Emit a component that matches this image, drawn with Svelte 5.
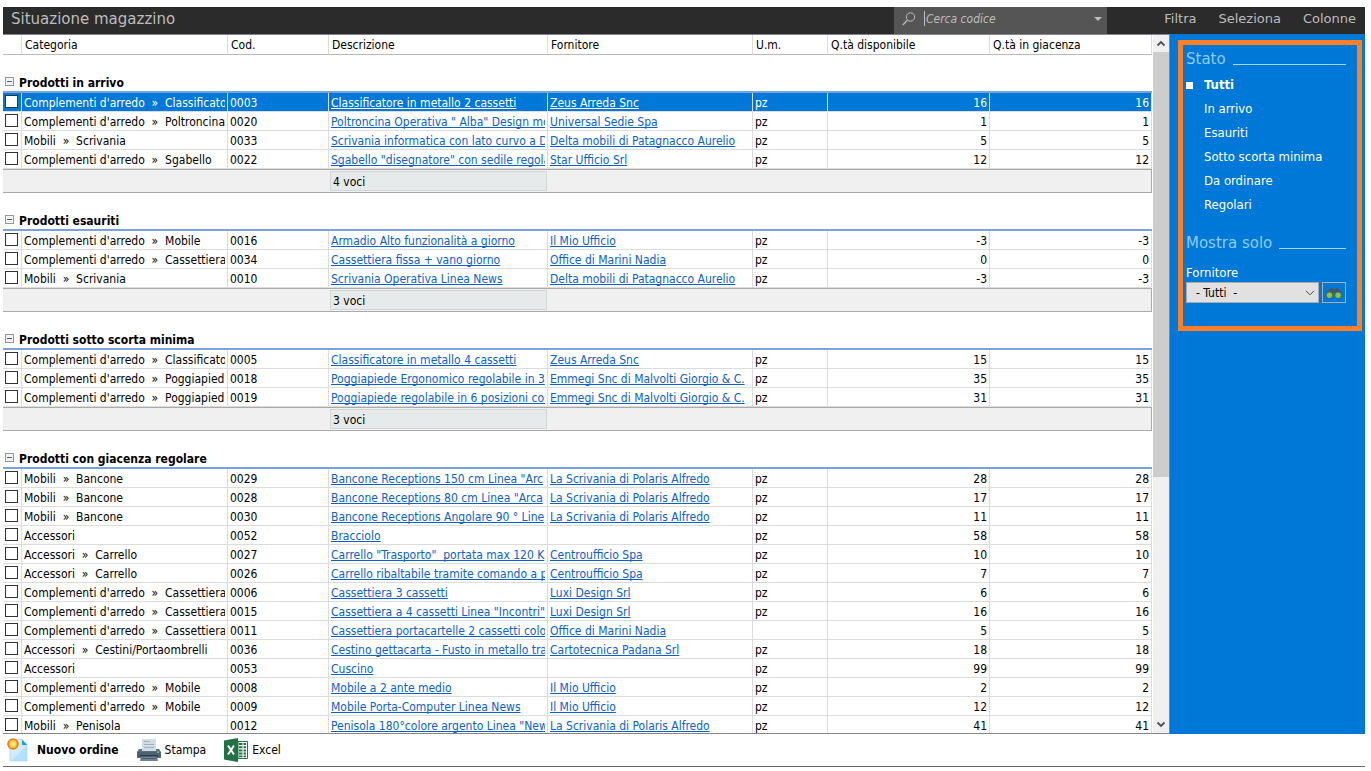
<script>
  const columns = [
    { label: '', width: 19 },
    { label: 'Categoria', width: 206 },
    { label: 'Cod.', width: 101 },
    { label: 'Descrizione', width: 219 },
    { label: 'Fornitore', width: 205 },
    { label: 'U.m.', width: 75 },
    { label: 'Q.tà disponibile', width: 162 },
    { label: 'Q.tà in giacenza', width: null }
  ];

  const arredo = "Complementi d'arredo";

  const groups = $state([
    {
      title: 'Prodotti in arrivo',
      open: true,
      summary: '4 voci',
      rows: [
        [`${arredo}  »  Classificato`, '0003', 'Classificatore in metallo 2 cassetti', 'Zeus Arreda Snc', 'pz', 16],
        [`${arredo}  »  Poltroncina`, '0020', 'Poltroncina Operativa " Alba" Design mo', 'Universal Sedie Spa', 'pz', 1],
        ['Mobili  »  Scrivania', '0033', 'Scrivania informatica con lato curvo a Dx', 'Delta mobili di Patagnacco Aurelio', 'pz', 5],
        [`${arredo}  »  Sgabello`, '0022', 'Sgabello "disegnatore" con sedile regola', 'Star Ufficio Srl', 'pz', 12]
      ]
    },
    {
      title: 'Prodotti esauriti',
      open: true,
      summary: '3 voci',
      rows: [
        [`${arredo}  »  Mobile`, '0016', 'Armadio Alto funzionalità a giorno', 'Il Mio Ufficio', 'pz', -3],
        [`${arredo}  »  Cassettiera`, '0034', 'Cassettiera fissa + vano giorno', 'Office di Marini Nadia', 'pz', 0],
        ['Mobili  »  Scrivania', '0010', 'Scrivania Operativa Linea News', 'Delta mobili di Patagnacco Aurelio', 'pz', -3]
      ]
    },
    {
      title: 'Prodotti sotto scorta minima',
      open: true,
      summary: '3 voci',
      rows: [
        [`${arredo}  »  Classificato`, '0005', 'Classificatore in metallo 4 cassetti', 'Zeus Arreda Snc', 'pz', 15],
        [`${arredo}  »  Poggiapied`, '0018', 'Poggiapiede Ergonomico regolabile in 3', 'Emmegi Snc di Malvolti Giorgio & C.', 'pz', 35],
        [`${arredo}  »  Poggiapied`, '0019', 'Poggiapiede regolabile in 6 posizioni con', 'Emmegi Snc di Malvolti Giorgio & C.', 'pz', 31]
      ]
    },
    {
      title: 'Prodotti con giacenza regolare',
      open: true,
      summary: null,
      rows: [
        ['Mobili  »  Bancone', '0029', 'Bancone Receptions 150 cm Linea "Arc', 'La Scrivania di Polaris Alfredo', 'pz', 28],
        ['Mobili  »  Bancone', '0028', 'Bancone Receptions 80 cm Linea "Arca', 'La Scrivania di Polaris Alfredo', 'pz', 17],
        ['Mobili  »  Bancone', '0030', 'Bancone Receptions Angolare 90 ° Line', 'La Scrivania di Polaris Alfredo', 'pz', 11],
        ['Accessori', '0052', 'Bracciolo', '', 'pz', 58],
        ['Accessori  »  Carrello', '0027', 'Carrello "Trasporto"  portata max 120 K', 'Centroufficio Spa', 'pz', 10],
        ['Accessori  »  Carrello', '0026', 'Carrello ribaltabile tramite comando a pi', 'Centroufficio Spa', 'pz', 7],
        [`${arredo}  »  Cassettiera`, '0006', 'Cassettiera 3 cassetti', 'Luxi Design Srl', 'pz', 6],
        [`${arredo}  »  Cassettiera`, '0015', 'Cassettiera a 4 cassetti Linea "Incontri"', 'Luxi Design Srl', 'pz', 16],
        [`${arredo}  »  Cassettiera`, '0011', 'Cassettiera portacartelle 2 cassetti colo', 'Office di Marini Nadia', '', 5],
        ['Accessori  »  Cestini/Portaombrelli', '0036', 'Cestino gettacarta - Fusto in metallo tra', 'Cartotecnica Padana Srl', 'pz', 18],
        ['Accessori', '0053', 'Cuscino', '', 'pz', 99],
        [`${arredo}  »  Mobile`, '0008', 'Mobile a 2 ante medio', 'Il Mio Ufficio', 'pz', 2],
        [`${arredo}  »  Mobile`, '0009', 'Mobile Porta-Computer Linea News', 'Il Mio Ufficio', 'pz', 12],
        ['Mobili  »  Penisola', '0012', 'Penisola 180°colore argento Linea "New', 'La Scrivania di Polaris Alfredo', 'pz', 41]
      ]
    }
  ]);

  const states = ['Tutti', 'In arrivo', 'Esauriti', 'Sotto scorta minima', 'Da ordinare', 'Regolari'];
  let activeState = $state('Tutti');
  let selected = $state('0003');
</script>

<div class="window">
  <header class="titlebar">
    <h1>Situazione magazzino</h1>
    <div class="search">
      <svg class="lens" width="14" height="14" viewBox="0 0 14 14" aria-hidden="true">
        <circle cx="8.5" cy="5" r="4.2" fill="none" stroke="#bdbdbd" />
        <path d="M5.4 8.2 0.8 13" stroke="#bdbdbd" stroke-width="1.3" fill="none" />
      </svg>
      <input type="text" placeholder="Cerca codice" aria-label="Cerca codice" />
      <button class="drop" aria-label="Ricerche recenti">
        <svg width="8" height="4" viewBox="0 0 8 4"><path d="M0 0h8L4 4z" fill="#bdbdbd" /></svg>
      </button>
    </div>
    <nav>
      <button>Filtra</button>
      <button>Seleziona</button>
      <button>Colonne</button>
    </nav>
  </header>

  <div class="body">
    <main class="list">
      <div class="viewport">
        <table>
          <colgroup>
            {#each columns as c}
              <col style={c.width ? `width:${c.width}px` : ''} />
            {/each}
          </colgroup>
          <thead>
            <tr>
              {#each columns as c}
                <th scope="col">{c.label}</th>
              {/each}
            </tr>
          </thead>
          {#each groups as g}
            <tbody>
              <tr class="group">
                <th colspan="8" scope="colgroup">
                  <div>
                    <button class="toggle" aria-label={g.title} aria-expanded={g.open} onclick={() => (g.open = !g.open)}>
                      <svg width="9" height="9" viewBox="0 0 9 9">
                        <rect x=".5" y=".5" width="8" height="8" fill="#f3f3f3" stroke="#969696" />
                        <path d="M2 4.5h5" stroke="#3c5a9a" />
                        {#if !g.open}<path d="M4.5 2v5" stroke="#3c5a9a" />{/if}
                      </svg>
                    </button>
                    <span>{g.title}</span>
                  </div>
                </th>
              </tr>
              {#if g.open}
                {#each g.rows as [cat, code, desc, supplier, unit, qty]}
                  <tr class="item" class:selected={selected === code} onclick={() => (selected = code)}>
                    <td class="check"><input type="checkbox" aria-label={`Seleziona ${code}`} /></td>
                    <td><div>{cat}</div></td>
                    <td><div>{code}</div></td>
                    <td><div><a href="#prodotto">{desc}</a></div></td>
                    <td><div>{#if supplier}<a href="#fornitore">{supplier}</a>{/if}</div></td>
                    <td><div>{unit}</div></td>
                    <td class="num"><div>{qty}</div></td>
                    <td class="num"><div>{qty}</div></td>
                  </tr>
                {/each}
                {#if g.summary}
                  <tr class="summary">
                    <td colspan="3"></td>
                    <td><div>{g.summary}</div></td>
                    <td colspan="4"></td>
                  </tr>
                {/if}
              {/if}
            </tbody>
          {/each}
        </table>
      </div>
      <div class="scrollbar" aria-hidden="true">
        <svg width="16" height="17" viewBox="0 0 16 17"><path d="M4.5 10.5 8 7l3.5 3.5" fill="none" stroke="#505050" stroke-width="1.8" /></svg>
        <div class="track"><div class="thumb"></div></div>
        <svg width="16" height="17" viewBox="0 0 16 17"><path d="M4.5 6.5 8 10l3.5-3.5" fill="none" stroke="#505050" stroke-width="1.8" /></svg>
      </div>
    </main>

    <aside>
      <div class="panel">
        <h2>Stato</h2>
        <ul>
          {#each states as s}
            <li><button class:active={activeState === s} onclick={() => (activeState = s)}>{s}</button></li>
          {/each}
        </ul>
        <h2>Mostra solo</h2>
        <label for="supplier">Fornitore</label>
        <div class="pick">
          <div class="select">
            <select id="supplier">
              <option>- Tutti&nbsp; -</option>
            </select>
            <svg width="10" height="6" viewBox="0 0 10 6" aria-hidden="true"><path d="M1 .8 5 4.8 9 .8" fill="none" stroke="#444" /></svg>
          </div>
          <button class="find" aria-label="Cerca fornitore">
            <svg width="16" height="12" viewBox="0 0 16 12">
              <path d="M1 7C1.5 3 3 1 5.500 1L7 2h2l1.500-1C13 1 14.500 3 15 7l-2 2-4-1-.5-3h-1L7 8 3 9z" fill="#4a5560" />
              <circle cx="3.700" cy="8" r="3.500" fill="#4a6a45" />
              <circle cx="12.300" cy="8" r="3.500" fill="#4a6a45" />
              <circle cx="3.500" cy="8.200" r="2.700" fill="#8cc63f" />
              <circle cx="12.100" cy="8.200" r="2.700" fill="#8cc63f" />
            </svg>
          </button>
        </div>
      </div>
    </aside>
  </div>

  <footer class="toolbar">
    <button class="primary">
      <svg width="22" height="24" viewBox="0 0 22 24" aria-hidden="true">
        <defs>
          <linearGradient id="sheet" x1="0" y1="0" x2="1" y2="1">
            <stop offset="0" stop-color="#d9f1fd" /><stop offset="1" stop-color="#bfe7fb" />
          </linearGradient>
        </defs>
        <path d="M3 1.500h12l5 5V23H3z" fill="url(#sheet)" stroke="#a9cfe3" stroke-width=".6" />
        <path d="M15 1.500V7h5.200z" fill="#1b9be0" />
        <path d="M4 23 20 8v15z" fill="#9fdaf8" opacity=".5" />
        <circle cx="6" cy="6" r="5.800" fill="#ee7f1b" />
        <circle cx="6" cy="6" r="3.900" fill="#ffc93d" />
        <circle cx="6" cy="6" r="2.600" fill="#ffe47a" />
      </svg>
      <span>Nuovo ordine</span>
    </button>
    <button>
      <svg width="24" height="22" viewBox="0 0 24 22" aria-hidden="true">
        <path d="M5 0h14v12H5z" fill="#cfdde4" />
        <path d="M7 2.500h6M7 5.500h10M7 8.500h10" stroke="#9db1bc" />
        <path d="M2 10h3v2h14v-2h3l2 3v6H0v-6z" fill="#5b6f7d" />
        <path d="M0 13h24v5H0z" fill="#4d6170" />
        <path d="M20 12.500h2V14h-2z" fill="#6ed84c" />
        <path d="M3 16h18v2H3z" fill="#2c3b46" />
        <path d="M4 17.500h16l1 4.500H3z" fill="#6d8493" />
        <path d="M4 19h16v1H4z" fill="#4d6170" />
      </svg>
      <span>Stampa</span>
    </button>
    <button>
      <svg width="24" height="24" viewBox="0 0 24 24" aria-hidden="true">
        <path d="M14 3.500h9.500v17H14z" fill="#fff" stroke="#207245" />
        <path d="M15 5h3.500v2H15zM19.500 5H22v2h-2.500zM15 8.200h3.500v2H15zM19.500 8.200H22v2h-2.500zM15 11.400h3.500v2H15zM19.500 11.400H22v2h-2.500zM15 14.600h3.500v2H15zM19.500 14.600H22v2h-2.500zM15 17.600h3.500v1.600H15zM19.500 17.600H22v1.600h-2.500z" fill="#207245" />
        <path d="M0 2.500 14 0v24L0 21.500z" fill="#207245" />
        <path d="m4 7.500 6 9M10 7.500l-6 9" stroke="#fff" stroke-width="2" />
      </svg>
      <span>Excel</span>
    </button>
  </footer>
</div>

<style>
  :global(body) {
    margin: 0;
    background: #fff;
  }

  .window {
    box-sizing: border-box;
    height: 100vh;
    padding: 7px 6px 4px 3px;
    display: flex;
    flex-direction: column;
    font: 12px/18px 'DejaVu Sans Condensed', 'Noto Sans', sans-serif;
    color: #000;
  }

  button,
  input,
  select {
    font: inherit;
    color: inherit;
    border: 0;
    padding: 0;
    margin: 0;
    background: none;
  }

  button {
    cursor: pointer;
  }

  /* Title bar */
  .titlebar {
    flex: none;
    height: 27px;
    display: flex;
    align-items: center;
    background: #2b2b2b;
    color: #bdbdbd;
  }

  .titlebar h1 {
    flex: 1;
    margin: 0;
    padding: 0 8px 4px;
    font: 15px/20px 'DejaVu Sans', sans-serif;
  }

  .search {
    width: 213px;
    height: 27px;
    box-sizing: border-box;
    display: flex;
    align-items: center;
    padding: 0 5px 4px 8px;
    background: #555;
  }

  .search input {
    flex: 1;
    min-width: 0;
    height: 15px;
    margin-left: 8px;
    padding-left: 1px;
    border-left: 1px solid #bdbdbd;
    outline: 0;
    font-style: italic;
  }

  .search input::placeholder {
    color: #bdbdbd;
    opacity: 1;
  }

  .drop {
    display: flex;
  }

  nav {
    width: 258px;
    box-sizing: border-box;
    padding: 0 9px 4px 0;
    display: flex;
    justify-content: flex-end;
    gap: 22px;
    font: 13px/20px 'DejaVu Sans', sans-serif;
  }

  /* Product list */
  .body {
    flex: 1;
    min-height: 0;
    display: flex;
  }

  .list {
    flex: 1;
    min-width: 0;
    display: flex;
    gap: 1px;
    border: solid #85858d;
    border-width: 1px 1px 1px 0;
  }

  .viewport {
    flex: 1;
    min-width: 0;
    overflow: hidden;
  }

  table {
    width: 100%;
    table-layout: fixed;
    border-collapse: separate;
    border-spacing: 0;
  }

  th,
  td {
    box-sizing: border-box;
    padding: 0 2px;
    text-align: left;
    font-weight: normal;
    border-right: 1px solid #dcdcdc;
  }

  thead th {
    height: 20px;
    padding: 1px 3px 0;
    border-bottom: 1px solid #b9b9b9;
  }

  .group th {
    height: 38px;
    padding: 0 2px;
    vertical-align: bottom;
    border-right: 0;
    border-bottom: 2px solid #7ba2de;
    font-weight: bold;
    line-height: 16px;
  }

  .group div {
    display: flex;
    align-items: flex-start;
    gap: 5px;
  }

  .toggle {
    display: flex;
    padding-top: 2px;
  }

  .item td {
    height: 19px;
    border-bottom: 1px solid #dcdcdc;
  }

  .item div {
    height: 18px;
    line-height: 20px;
    overflow: hidden;
    white-space: pre;
  }

  .item .num {
    text-align: right;
  }

  .item a {
    color: #0b61cf;
    text-underline-offset: 1px;
    text-decoration-skip-ink: none;
  }

  .item.selected td {
    background: #0078d8;
    color: #fff;
  }

  .item.selected a {
    color: #fff;
  }

  .item .check {
    padding-top: 2px;
    vertical-align: top;
  }

  .check input {
    appearance: none;
    display: block;
    box-sizing: border-box;
    width: 13px;
    height: 13px;
    border: 1px solid #333;
    background: #fff;
  }

  .check input:checked {
    box-shadow: inset 0 0 0 2px #fff;
    background: #333;
  }

  .summary td {
    height: 24px;
    padding: 0 1px;
    background: #f0f0f0;
    border: solid #aaa;
    border-width: 1px 0;
  }

  .summary td:last-child {
    border-right-width: 1px;
  }

  .summary div {
    height: 18px;
    line-height: 20px;
    border: 1px solid #d2d6d6;
    background: #e6eaea;
    padding: 0 2px;
  }

  .scrollbar {
    width: 16px;
    display: flex;
    flex-direction: column;
    background: #f0f0f0;
  }

  .track {
    flex: 1;
  }

  .thumb {
    height: 64%;
    background: #cdcdcd;
  }

  /* Filter panel */
  aside {
    width: 195px;
    box-sizing: border-box;
    padding: 6px 3px 0 8px;
    background: #0078d8;
    color: #fff;
    font-size: 13px;
  }

  .panel {
    border: 5px solid #ff7f27;
    padding: 4px 11px 23px 3px;
  }

  h2 {
    display: flex;
    align-items: flex-end;
    gap: 7px;
    margin: 0;
    font: 15px/20px 'DejaVu Sans', sans-serif;
    color: #8ecbf7;
  }

  h2::after {
    content: '';
    flex: 1;
    margin-bottom: 4px;
    border-bottom: 1px solid #a5d5f8;
  }

  ul {
    list-style: none;
    margin: 0 0 16px;
    padding: 4px 0 0;
  }

  li button {
    display: flex;
    align-items: center;
    width: 100%;
    height: 24px;
    padding-left: 18px;
  }

  li .active {
    padding-left: 0;
    gap: 11px;
    font-weight: bold;
  }

  li .active::before {
    content: '';
    width: 7px;
    height: 7px;
    background: #fff;
  }

  label {
    display: block;
    margin-top: 11px;
  }

  .pick {
    display: flex;
    gap: 3px;
  }

  .select {
    flex: 1;
    display: grid;
    align-items: center;
  }

  .select > * {
    grid-area: 1 / 1;
  }

  .select svg {
    justify-self: end;
    margin-right: 4px;
    pointer-events: none;
  }

  select {
    appearance: none;
    width: 100%;
    height: 21px;
    box-sizing: border-box;
    padding: 1px 8px 0 9px;
    border: 1px solid #acacac;
    background: #e1e1e1;
    color: #000;
    font-size: 12px;
  }

  .find {
    box-sizing: border-box;
    width: 24px;
    height: 21px;
    display: grid;
    place-items: center;
    border: 1px solid #acacac;
  }

  /* Bottom commands */
  .toolbar {
    flex: none;
    height: 32px;
    display: flex;
    align-items: center;
    gap: 18px;
    padding-left: 4px;
    border-bottom: 1px solid #6b696b;
  }

  .toolbar button {
    display: flex;
    align-items: center;
    gap: 4px;
    line-height: 20px;
  }

  .toolbar .primary {
    gap: 8px;
    font-weight: bold;
  }
</style>
